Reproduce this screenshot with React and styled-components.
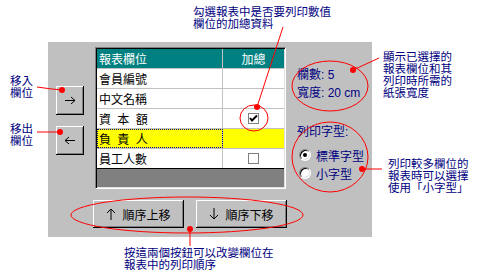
import React from "react";
import styled, { createGlobalStyle } from "styled-components";

const GlobalStyle = createGlobalStyle`
  body {
    margin: 0;
    background: #ffffff;
    font-family: "Liberation Sans", "Noto Sans CJK TC", sans-serif;
  }
`;

// page

const Canvas = styled.div`
  position: relative;
  width: 481px;
  height: 275px;
  overflow: hidden;
  box-sizing: border-box;
  padding: 42px 0 0 48px;
  background: #ffffff;
`;

const Panel = styled.div`
  width: 324px;
  height: 195px;
  box-sizing: border-box;
  padding: 5px 0 0 8px;
  background: #c0c0c0;
  display: grid;
  grid-template-columns: 28px 191px 1fr;
  grid-template-rows: 142px auto;
  column-gap: 11px;
  font-size: 12px;
`;

// buttons

const raised = `
  background: #c0c0c0;
  border: none;
  box-sizing: border-box;
  box-shadow: inset -1px -1px 0 #000000, inset 1px 1px 0 #ffffff,
    inset -2px -2px 0 #808080;
  padding: 0;
  font-family: inherit;
  color: #000000;
  display: flex;
  align-items: center;
  justify-content: center;
`;

const MoveColumn = styled.div`
  display: flex;
  flex-direction: column;
  gap: 11px;
  padding-top: 39px;
`;

const MoveBtn = styled.button`
  ${raised}
  width: 28px;
  height: 29px;
`;

const OrderRow = styled.div`
  grid-column: 1 / -1;
  display: flex;
  gap: 12px;
  margin-top: 11px;
  padding-left: 37px;
`;

const OrderBtn = styled.button`
  ${raised}
  width: 91px;
  height: 28px;
  font-size: 12px;
  gap: 6px;
`;

// table

const Table = styled.div`
  box-sizing: border-box;
  width: 191px;
  height: 142px;
  border-style: solid;
  border-width: 1px;
  border-color: #808080 #ffffff #ffffff #808080;
  box-shadow: inset 1px 1px 0 #000000, inset -1px -1px 0 #dfdfdf;
  padding: 1px;
  display: flex;
  flex-direction: column;
  background: #808080;
`;

const Row = styled.div`
  display: grid;
  grid-template-columns: 126px 1fr;
  height: 20px;
  box-sizing: border-box;
  border-bottom: 1px solid ${(p) => (p.$last ? "#000000" : "#c0c0c0")};
  background: ${(p) => (p.$head ? "#008080" : p.$active ? "#ffff00" : "#ffffff")};
  color: ${(p) => (p.$head ? "#ffffff" : "#000000")};
`;

const Cell = styled.div`
  box-sizing: border-box;
  display: flex;
  align-items: center;
  justify-content: ${(p) => (p.$center ? "center" : "flex-start")};
  padding-left: ${(p) => (p.$center ? "0" : "2px")};
  border-right: 1px solid #c0c0c0;
  word-spacing: ${(p) => (p.$spaced ? "3px" : "0")};
  outline: ${(p) => (p.$focus ? "1px dotted #000080" : "none")};
  outline-offset: -1px;
  &:last-child {
    border-right: none;
  }
`;

const CheckBox = styled.span`
  width: 11px;
  height: 11px;
  box-sizing: border-box;
  border: 1px solid #808080;
  background: #ffffff;
  display: flex;
  align-items: center;
  justify-content: center;
`;

const Filler = styled.div`
  flex: 1;
`;

// right column

const Info = styled.div`
  padding-top: 19px;
  color: #000080;
  display: flex;
  flex-direction: column;
`;

const InfoLine = styled.div`
  height: 18px;
  line-height: 18px;
  margin-top: ${(p) => p.$gap || 0}px;
  white-space: nowrap;
`;

const RadioRow = styled.div`
  height: 18px;
  display: flex;
  align-items: center;
  gap: 5px;
  padding-left: 2px;
  margin-top: ${(p) => p.$gap || 0}px;
  white-space: nowrap;
`;

const RadioDot = styled.span`
  width: 12px;
  height: 12px;
  border-radius: 50%;
  box-sizing: border-box;
  background: #ffffff;
  border: 1px solid;
  border-color: #808080 #ffffff #ffffff #808080;
  box-shadow: inset 1px 1px 0 #000000, inset -1px -1px 0 #dfdfdf;
  display: flex;
  align-items: center;
  justify-content: center;
  &::after {
    content: "";
    width: 4px;
    height: 4px;
    border-radius: 50%;
    background: ${(p) => (p.$on ? "#000000" : "transparent")};
  }
`;

// annotations

const Note = styled.div`
  position: absolute;
  left: ${(p) => p.$x}px;
  top: ${(p) => p.$y}px;
  color: #000080;
  font-family: "Noto Sans CJK TC", sans-serif;
  font-size: 11.5px;
  line-height: 12px;
  white-space: nowrap;
`;

const Overlay = styled.svg`
  position: absolute;
  left: 0;
  top: 0;
  pointer-events: none;
`;

const Arrow = ({ dir }) => {
  const d = {
    right: "M1 4.5H11M7 1l4 3.5L7 8",
    left: "M11 4.5H1M5 1L1 4.5 5 8",
  }[dir];
  return (
    <svg width="12" height="9" viewBox="0 0 12 9">
      <path d={d} fill="none" stroke="#000" strokeWidth="1" />
    </svg>
  );
};

const VArrow = ({ dir }) => {
  const d = dir === "up" ? "M5 12V1M1 5L5 1l4 4" : "M5 0V11M1 7l4 4 4-4";
  return (
    <svg width="10" height="12" viewBox="0 0 10 12">
      <path d={d} fill="none" stroke="#000" strokeWidth="1" />
    </svg>
  );
};

const rows = [
  { name: "會員編號" },
  { name: "中文名稱" },
  { name: "資 本 額", spaced: true, box: "on" },
  { name: "負 責 人", spaced: true, active: true },
  { name: "員工人數", box: "off", last: true },
];

export default function App() {
  return (
    <>
      <GlobalStyle />
      <Canvas>
        <Panel>
          <MoveColumn>
            <MoveBtn>
              <Arrow dir="right" />
            </MoveBtn>
            <MoveBtn>
              <Arrow dir="left" />
            </MoveBtn>
          </MoveColumn>

          <Table>
            <Row $head>
              <Cell>報表欄位</Cell>
              <Cell $center>加總</Cell>
            </Row>
            {rows.map((r) => (
              <Row key={r.name} $active={r.active} $last={r.last}>
                <Cell $spaced={r.spaced} $focus={r.active}>
                  {r.name}
                </Cell>
                <Cell $center>
                  {r.box && (
                    <CheckBox>
                      {r.box === "on" && (
                        <svg width="9" height="9" viewBox="0 0 9 9">
                          <path d="M1 4l2 2.5L8 1.5" fill="none" stroke="#000" strokeWidth="2" />
                        </svg>
                      )}
                    </CheckBox>
                  )}
                </Cell>
              </Row>
            ))}
            <Filler />
          </Table>

          <Info>
            <InfoLine>欄數: 5</InfoLine>
            <InfoLine>寬度: 20 cm</InfoLine>
            <InfoLine $gap={21}>列印字型:</InfoLine>
            <RadioRow $gap={5}>
              <RadioDot $on />
              標準字型
            </RadioRow>
            <RadioRow>
              <RadioDot />
              小字型
            </RadioRow>
          </Info>

          <OrderRow>
            <OrderBtn>
              <VArrow dir="up" />
              順序上移
            </OrderBtn>
            <OrderBtn>
              <VArrow dir="down" />
              順序下移
            </OrderBtn>
          </OrderRow>
        </Panel>

        <Note $x={193} $y={5}>
          勾選報表中是否要列印數值
          <br />
          欄位的加總資料
        </Note>
        <Note $x={10} $y={74}>
          移入
          <br />
          欄位
        </Note>
        <Note $x={10} $y={122}>
          移出
          <br />
          欄位
        </Note>
        <Note $x={383} $y={50}>
          顯示已選擇的
          <br />
          報表欄位和其
          <br />
          列印時所需的
          <br />
          紙張寬度
        </Note>
        <Note $x={388} $y={157}>
          列印較多欄位的
          <br />
          報表時可以選擇
          <br />
          使用「小字型」
        </Note>
        <Note $x={124} $y={246}>
          按這兩個按鈕可以改變欄位在
          <br />
          報表中的列印順序
        </Note>

        <Overlay width="481" height="275" viewBox="0 0 481 275">
          <g fill="none" stroke="#ff0000" strokeWidth="1">
            <ellipse cx="254" cy="118" rx="14" ry="13" />
            <ellipse cx="330" cy="86" rx="38" ry="25" />
            <ellipse cx="330" cy="157" rx="38" ry="35" />
            <ellipse cx="187" cy="215" rx="116" ry="18" />
            <path d="M37 87L52 89L62 90" />
            <path d="M37 132H60" />
            <path d="M283 27L257 107" />
            <path d="M379 58L353 70" />
            <path d="M382 169H362" />
            <path d="M190 229V246" />
          </g>
          <g fill="#ff0000">
            <circle cx="62" cy="90" r="3" />
            <circle cx="60" cy="132" r="3" />
            <circle cx="257" cy="107" r="3" />
            <circle cx="353" cy="70" r="3" />
            <circle cx="362" cy="169" r="3" />
            <circle cx="190" cy="229" r="3" />
          </g>
        </Overlay>
      </Canvas>
    </>
  );
}
